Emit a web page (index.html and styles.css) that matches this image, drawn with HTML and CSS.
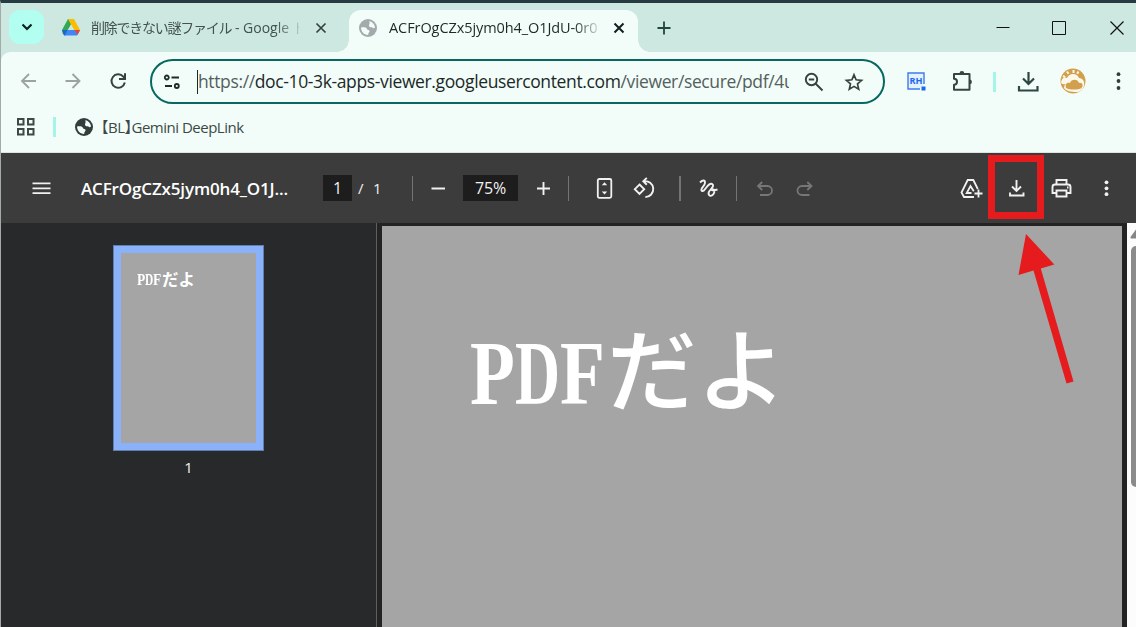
FILE: index.html
```html
<!DOCTYPE html>
<html lang="ja">
<head>
    <meta charset="UTF-8">
    <meta name="viewport" content="width=device-width, initial-scale=1.0">
    <title>PDF Viewer</title>
    <link rel="stylesheet" href="styles.css">
</head>
<body>
    <div class="window">
        <div class="tabstrip">
            <div class="tab-search">
                <svg width="14" height="14" viewBox="0 0 14 14"><path d="M2.500 4.500 7 9l4.500-4.500" fill="none" stroke="#10201e" stroke-width="2.200"/></svg>
            </div>
            <div class="tab">
                <svg class="favicon" width="18" height="17" viewBox="0 0 18 17">
                    <path d="M6 0h6L3.300 16.500.800 15 0 11z" fill="#34a853"/>
                    <path d="M6 0h6l6 11h-6z" fill="#fbbc04"/>
                    <path d="M3.200 11H18l-2.500 5q-.500.600-1.200.600H3.700Q2.500 16.600 2 16z" fill="#4285f4"/>
                    <path d="M0 11h5.500l-2.700 5.500Q2 16.300 1.700 15.500z" fill="#1967d2"/>
                    <path d="M12.500 11H18l-2.300 4.500z" fill="#ea4335"/>
                    <path d="M9 5.500 12.200 11H5.800z" fill="#cce8e1"/>
                </svg>
                <div class="tab-title"><span class="jp">削除できない謎ファイル</span> - Google ド</div>
                <svg class="tab-close" width="12" height="12" viewBox="0 0 12 12"><path d="m1.500 1.500 9 9m0-9-9 9" stroke="#33423f" stroke-width="1.700"/></svg>
            </div>
            <div class="tab active">
                <svg class="favicon" width="18" height="18" viewBox="0 0 18 18">
                    <circle cx="9" cy="9" r="9" fill="#a4a9ac"/>
                    <path d="M10.500 2c3 .800 5.300 3.400 5.500 6.500-.800 1.200-2.300 1-2.800-.300-1.700.400-3.300-.200-3.200-1.900.100-1 .900-1.300.500-2.200zM2 8.500c2.500-.300 5.500-.200 6 1.600.300 1.500 2.200.700 2.600 1.900.300 1.300-1.600 1.500-1.400 3.900C5 16 2.200 13 2 8.500z" fill="#f2fdf9"/>
                </svg>
                <div class="tab-title">ACFrOgCZx5jym0h4_O1JdU-0r0</div>
                <svg class="tab-close" width="12" height="12" viewBox="0 0 12 12"><path d="m1.500 1.500 9 9m0-9-9 9" stroke="#10201e" stroke-width="2"/></svg>
            </div>
            <svg class="new-tab" width="14" height="14" viewBox="0 0 14 14"><path d="M7 .500v13M.500 7h13" stroke="#24443e" stroke-width="1.800"/></svg>
            <div class="window-buttons">
                <svg width="14" height="14" viewBox="0 0 14 14"><path d="M.500 6.500h13" stroke="#111"/></svg>
                <svg width="14" height="14" viewBox="0 0 14 14"><path d="M1 .500h12.500v13H.500V.500z" fill="none" stroke="#111"/></svg>
                <svg width="14" height="14" viewBox="0 0 14 14"><path d="m.500.500 13 13m0-13-13 13" stroke="#111" stroke-width="1.200"/></svg>
            </div>
        </div>

        <div class="browser">
            <div class="navbar">
                <svg class="icon" viewBox="0 0 24 24" fill="none" stroke="#9da3a1" stroke-width="1.900"><path d="M19 12H5m7-7-7 7 7 7"/></svg>
                <svg class="icon forward" viewBox="0 0 24 24" fill="none" stroke="#9da3a1" stroke-width="1.900"><path d="M4.500 12h14m-7-7 7 7-7 7"/></svg>
                <svg class="icon reload" viewBox="0 0 24 24" fill="none" stroke="#34433f" stroke-width="2"><path d="M18.800 13.500A6.700 6.700 0 1 1 17.300 7.600l1.700 2M19 4.300V10h-6"/></svg>
                <div class="omnibox">
                    <svg width="18" height="18" viewBox="0 0 18 18" fill="none" stroke="#1d2b29" stroke-width="1.800"><circle cx="3.800" cy="4.500" r="2"/><path d="M8.500 4.500H16M2 13h7"/><circle cx="13.800" cy="13" r="2"/></svg>
                    <div class="url">https://<b>doc-10-3k-apps-viewer.googleusercontent.com</b>/viewer/secure/pdf/4u</div>
                    <svg class="zoom-icon" width="20" height="20" viewBox="0 0 20 20" fill="none" stroke="#37433f" stroke-width="1.900"><circle cx="7.500" cy="7.500" r="5.700"/><path d="m11.500 11.500 7 7M4.800 7.500h5.400"/></svg>
                    <svg class="star" width="20" height="20" viewBox="0 0 20 20" fill="none" stroke="#37433f" stroke-width="1.700"><path d="m10 2.800 2.100 5 5.500.500-4.100 3.600 1.200 5.400-4.700-2.900-4.700 2.900 1.200-5.400-4.100-3.600 5.500-.500z"/></svg>
                </div>
                <svg class="icon rh" viewBox="0 0 24 24"><path d="M20 15V4H4v16h12" fill="#e4f0fc" stroke="#3b7de9" stroke-width="1.400"/><text x="5.500" y="15" textLength="13" lengthAdjust="spacingAndGlyphs">RH</text><path d="M17.500 17.500h4v4h-4z" fill="#1769ee"/></svg>
                <svg class="icon puzzle" viewBox="0 0 24 24"><path d="M4 5h15.500v15.800H4v-5a3 3 0 0 0 0-6z" fill="none" stroke="#34463f" stroke-width="2" stroke-linejoin="round"/><path d="M9.500 4.500a2.400 2.400 0 0 1 4.800 0zm10 6a2.400 2.400 0 0 1 0 4.800z" fill="#34463f"/></svg>
                <span class="accent"></span>
                <svg class="icon download" viewBox="0 0 24 24" fill="none" stroke="#2d4742" stroke-width="2.200"><path d="M12.500 3v12M7 9.500l5.500 5.500L18 9.500M3 17v4.500h18.500V17"/></svg>
                <svg class="avatar" width="26" height="26" viewBox="0 0 26 26">
                    <circle cx="13" cy="13" r="12.500" fill="#d2a04c"/>
                    <path d="M1 15C1.500 10 4.500 8.500 7 10c2-5 10-5.500 12 0 4 0 6 4 5 8-1.500 4-5 6-7 6C11 24 6 23 4 20q0-3 2-4-3 1-5-1z" fill="#fbf7ea"/>
                    <path d="M6 20c-1-4 1-6 4-5 1-4.500 8-4.500 9 0 3-1 5 2.500 2.500 5-3 2-12 2-15.500 0z" fill="#d2a04c"/>
                    <path d="m3 8 2.200 1.200M7 3.500l1.500 2.300M13.500 2v3m5-1.500-1.300 2.300" stroke="#fbf7ea" stroke-width="2"/>
                </svg>
                <svg class="icon more" viewBox="0 0 24 24" fill="#2f3e3a"><circle cx="12.500" cy="5.200" r="1.900"/><circle cx="12.500" cy="12" r="1.900"/><circle cx="12.500" cy="19" r="1.900"/></svg>
            </div>
            <div class="bookmarks">
                <svg width="20" height="20" viewBox="0 0 20 20" fill="none" stroke="#3c4946" stroke-width="2"><path d="M2 2h5.500v5.500H2zM12 2h5.500v5.500H12zM2 12h5.500v5.500H2zM12 12h5.500v5.500H12z"/></svg>
                <span class="accent"></span>
                <svg width="18" height="18" viewBox="0 0 18 18">
                    <circle cx="9" cy="9" r="9" fill="#343d3c"/>
                    <path d="M10.500 2c3 .800 5.300 3.400 5.500 6.500-.800 1.200-2.300 1-2.800-.300-1.700.400-3.300-.200-3.200-1.900.100-1 .900-1.300.500-2.200zM2 8.500c2.500-.300 5.500-.200 6 1.600.300 1.500 2.200.700 2.600 1.900.300 1.300-1.600 1.500-1.400 3.900C5 16 2.200 13 2 8.500z" fill="#f2fdf9"/>
                </svg>
                <span class="bookmark">【BL】Gemini DeepLink</span>
            </div>
        </div>

        <div class="pdf-bar">
            <svg class="icon" viewBox="0 0 24 24" stroke="#f1f1f1" stroke-width="1.700"><path d="M3.500 7.300h18M3.500 12.300h18M3.500 17.200h18"/></svg>
            <div class="filename">ACFrOgCZx5jym0h4_O1J...</div>
            <div class="page-now">1</div>
            <div class="slash">/</div>
            <div class="page-total">1</div>
            <span class="divider d1"></span>
            <svg class="icon minus" viewBox="0 0 24 24" stroke="#f1f1f1" stroke-width="2"><path d="M5.500 12.500h13.500"/></svg>
            <div class="percent">75%</div>
            <svg class="icon plus" viewBox="0 0 24 24" stroke="#f1f1f1" stroke-width="1.900"><path d="M6 12.500h13M12.500 6v13"/></svg>
            <span class="divider d2"></span>
            <svg class="icon fit" viewBox="0 0 24 24"><rect x="5.800" y="3" width="13.500" height="18.800" rx="1.500" fill="none" stroke="#f1f1f1" stroke-width="1.800"/><path d="m9.800 9.300 2.700-3 2.700 3zm0 6.200 2.700 3 2.700-3z" fill="#f1f1f1"/></svg>
            <svg class="icon rotate" viewBox="0 0 24 24" fill="none" stroke="#f1f1f1" stroke-width="1.900"><path d="m7.500 8.500 4.700 4.700-4.700 4.700-4.700-4.700zM12 5.200a8 8 0 1 1 1.300 15.900M14.800 1.800l-3.500 3.500 3.500 3.400"/></svg>
            <span class="divider d3"></span>
            <svg class="icon draw" viewBox="0 0 24 24" fill="none" stroke="#f1f1f1" stroke-width="1.900"><path d="M4 6.500c2.800-2.800 5-2.500 5 .200C9 10 3.800 12.500 5.700 14.700c3 2.300 6-8.500 10.200-6.800 3.600 2-1.700 5-3.200 8.500-.700 3.300 2.300 4.500 4.300 2.300 2.300-2.500 1.500-6-.800-5.300-1.800.700 1.200 1.500 5.300.100"/></svg>
            <span class="divider d4"></span>
            <svg class="icon undo" viewBox="0 0 24 24" fill="none" stroke="#777" stroke-width="1.800"><path d="M9.200 6 5 10l4.200 4M5 10h9.500a4.500 4.500 0 0 1 0 9H7"/></svg>
            <svg class="icon redo" viewBox="0 0 24 24" fill="none" stroke="#777" stroke-width="1.800"><path d="M15.300 6l4.200 4-4.200 4m4.200-4H10a4.500 4.500 0 0 0 0 9h7.500"/></svg>
            <div class="pdf-actions">
                <svg class="icon" viewBox="0 0 24 24" fill="none" stroke="#f1f1f1" stroke-width="1.800"><path d="M15 21H5l-2.500-4.500L8.700 4h5.600l4.500 9M12.500 17H7.700l3.800-7 3.300 5.300M19.500 13.500v8M15.500 17.500h8"/></svg>
                <svg class="icon save" viewBox="0 0 24 24" fill="none" stroke="#f1f1f1" stroke-width="1.900"><path d="M12.500 4v11M8 10.500l4.500 4.500 4.500-4.500M6 16.500v3h13.500v-3"/></svg>
                <svg class="icon print" viewBox="0 0 24 24" fill="none" stroke="#f1f1f1" stroke-width="1.900"><path d="M7.500 8V4h10v4M7 17H3.500v-6q0-2.500 2.500-2.500h13q2.500 0 2.500 2.500v6H18M7.500 14.500h10v6h-10z"/><path d="M18 11.500h1.500"/></svg>
                <svg class="icon dots" viewBox="0 0 24 24" fill="#f1f1f1"><circle cx="12.500" cy="6.300" r="1.900"/><circle cx="12.500" cy="12.300" r="1.900"/><circle cx="12.500" cy="18.200" r="1.900"/></svg>
            </div>
        </div>

        <div class="viewer">
            <div class="sidebar">
                <div class="thumb">
                    <div class="mincho"><span>P</span><span>D</span><span>F</span><em>だよ</em></div>
                </div>
                <p>1</p>
            </div>
            <div class="page">
                <div class="mincho"><span>P</span><span>D</span><span>F</span><em>だよ</em></div>
            </div>
            <div class="scrollbar">
                <svg width="9" height="20" viewBox="0 0 9 20"><path d="M9 6.500 3.500 14q-.500 1.500 1 1.500H9z" fill="#858585"/></svg>
                <div class="scroll-thumb"></div>
            </div>
        </div>
    </div>

    <div class="highlight"></div>
    <svg class="arrow" width="59" height="152" viewBox="0 0 59 152"><path d="M11 0 39.300 30.500 25.800 34.500 58.500 147.500 51.500 149.500 18.500 36.500 3.500 41z" fill="#e51b1d"/></svg>
</body>
</html>
```
FILE: styles.css
```css
* {
    box-sizing: border-box;
}

body {
    margin: 0;
    width: 1136px;
    height: 627px;
    overflow: hidden;
    font-family: "Open Sans", "Noto Sans CJK JP", sans-serif;
}

svg {
    display: block;
    flex: none;
}

.window {
    height: 627px;
    display: flex;
    flex-direction: column;
    border-top: 3px solid #263c42;
    border-left: 1px solid #a3aaa8;
    background: #cce8e1;
}

/* tabs */
.tabstrip {
    height: 49px;
    display: flex;
    align-items: center;
    padding-left: 8px;
}

.tab-search {
    width: 35px;
    height: 34px;
    margin-bottom: 1px;
    border-radius: 11px;
    background: #b2fff2;
    display: flex;
    align-items: center;
    justify-content: center;
}

.tab {
    display: flex;
    align-items: center;
    width: 287px;
    height: 42px;
    padding-right: 13px;
    margin-left: 18px;
}

.tab-title {
    width: 208px;
    margin-left: 11px;
    overflow: hidden;
    white-space: nowrap;
    font-size: 14px;
    line-height: 24px;
    letter-spacing: 0;
    color: #43524f;
    -webkit-mask-image: linear-gradient(to right, #000 185px, transparent 214px);
    mask-image: linear-gradient(to right, #000 185px, transparent 214px);
}

.tab-title .jp {
    letter-spacing: -1.25px;
}

.tab-close {
    margin-left: 16px;
}

.tab.active {
    position: relative;
    width: 289px;
    margin: 7px 0 0;
    padding: 0 13px 7px 10px;
    border-radius: 12px 12px 0 0;
    background: #f2fdf9;
}

.tab.active .tab-title {
    width: 210px;
    margin-left: 12px;
    margin-right: -1px;
    font-size: 14.5px;
    letter-spacing: -0.08px;
    color: #1c2927;
}

.tab.active .tab-close {
    margin-left: 15px;
}

/* the outward curves at the foot of the active tab */
.tab.active::before,
.tab.active::after {
    content: "";
    position: absolute;
    bottom: 0;
    width: 12px;
    height: 12px;
}

.tab.active::before {
    left: -12px;
    background: radial-gradient(circle at 0 0, transparent 11.5px, #f2fdf9 12px);
}

.tab.active::after {
    right: -12px;
    background: radial-gradient(circle at 100% 0, transparent 11.5px, #f2fdf9 12px);
}

.new-tab {
    margin-left: 19px;
}

.window-buttons {
    display: flex;
    gap: 42px;
    margin-left: auto;
    padding-right: 12px;
}

.window-buttons svg:last-child {
    margin-left: 2px;
}

/* address bar */
.browser {
    height: 101px;
    border-radius: 9px 0 0 0;
    background: #f2fdf9;
    border-bottom: 1px solid #dce5e2;
}

.navbar {
    display: flex;
    align-items: center;
    height: 59px;
    padding-left: 16px;
}

.icon {
    width: 24px;
    height: 24px;
}

.navbar > .icon,
.navbar > .avatar {
    margin-bottom: 2px;
}

.forward {
    margin-left: 20px;
}

.reload {
    margin-left: 21px;
}

.omnibox {
    display: flex;
    align-items: center;
    width: 735px;
    height: 45px;
    margin-left: 20px;
    padding-left: 11px;
    border: 2px solid #08685f;
    border-radius: 23px;
}

.url {
    width: 592px;
    height: 24px;
    margin-left: 16px;
    border-left: 1px solid #1c2927;
    overflow: hidden;
    white-space: nowrap;
    font-size: 17.5px;
    line-height: 23px;
    letter-spacing: -0.37px;
    color: #53605d;
}

.url b {
    font-weight: 400;
    color: #1c2927;
}

.zoom-icon {
    margin-left: 15px;
}

.star {
    margin-left: 20px;
}

.rh {
    margin-left: 19px;
}

.rh text {
    font: 700 9px "Open Sans", sans-serif;
    fill: #1769ee;
}

.puzzle {
    margin-left: 22px;
}

.accent {
    width: 3px;
    height: 20px;
    background: #a2f5e7;
}

.navbar .accent {
    margin-left: 19px;
}

.download {
    margin-left: 20px;
}

.avatar {
    margin-left: 20px;
}

.more {
    margin-left: 20px;
}

.bookmarks {
    display: flex;
    align-items: center;
    height: 32px;
    padding-left: 15px;
}

.bookmarks .accent {
    margin: 0 19px 0 17px;
}

.bookmark {
    margin: 0 0 2px 8px;
    font-size: 15px;
    letter-spacing: -0.5px;
    white-space: nowrap;
    font-feature-settings: "halt";
    color: #3c4946;
}

/* pdf toolbar */
.pdf-bar {
    display: flex;
    align-items: center;
    height: 70px;
    padding-left: 28px;
    background: #3c3c3c;
    color: #f1f1f1;
    font-size: 15px;
}

.filename {
    width: 242px;
    margin-left: 28px;
    white-space: nowrap;
    font-size: 17px;
    font-weight: 600;
    letter-spacing: -0.15px;
    color: #fff;
}

.page-now,
.percent {
    width: 29px;
    height: 26px;
    line-height: 26px;
    text-align: center;
    font-size: 16px;
    background: #1d1d1d;
}

.percent {
    width: 55px;
    margin-left: 13px;
    letter-spacing: -0.2px;
}

.slash {
    width: 15px;
    margin-left: 6px;
}

.page-total {
    width: 10px;
}

.divider {
    width: 1px;
    height: 25px;
    background: #747474;
}

.d1 {
    margin-left: 29px;
}

.minus,
.plus {
    margin-left: 13px;
}

.d2 {
    margin-left: 13px;
}

.fit {
    margin-left: 23px;
}

.rotate {
    margin-left: 16px;
}

.d3 {
    width: 2px;
    margin-left: 23px;
}

.draw {
    margin-left: 15px;
}

.d4 {
    margin-left: 16px;
}

.undo {
    margin-left: 16px;
}

.redo {
    margin-left: 15px;
}

.pdf-actions {
    display: flex;
    margin-left: auto;
    padding-right: 18px;
}

.save,
.print,
.dots {
    margin-left: 21px;
}

/* document */
.viewer {
    flex: 1;
    display: flex;
    background: #232323;
}

.sidebar {
    width: 376px;
    padding: 22px 0 0 112px;
    background: #28292b;
    border-right: 1px solid #5f5f5f;
    color: #f1f1f1;
}

.thumb {
    width: 151px;
    height: 206px;
    padding: 19px 0 0 16px;
    border: 8px solid #8ab2fa;
    background: #a5a5a5;
    outline: 1px solid #607fae;
    outline-offset: -1px;
}

.sidebar p {
    width: 151px;
    margin: 6px 0 0;
    text-align: center;
    font-size: 15px;
    line-height: 20px;
}

.mincho {
    display: flex;
    font-family: "Noto Sans CJK JP", serif;
    font-size: 90px;
    font-weight: 500;
    line-height: 1;
    white-space: nowrap;
    color: #fff;
}

.mincho span {
    width: 0.49em;
    font-family: "Liberation Serif", serif;
    font-size: 1.02em;
    font-weight: 700;
    transform-origin: 0 50%;
    transform: scaleX(0.8);
}

.mincho span:nth-child(2) {
    transform: scaleX(0.68);
}

.mincho em {
    margin: -0.09em 0 0 0.02em;
    font-style: normal;
}

.thumb .mincho {
    font-size: 16.5px;
    font-weight: 700;
}

.page {
    width: 740px;
    margin: 3px 0 0 5px;
    padding: 102px 0 0 88px;
    background: #a5a5a5;
}

.scrollbar {
    width: 9px;
    margin-left: 5px;
    background: #fcfcfc;
}

.scroll-thumb {
    height: 241px;
    margin: 3px 0 0 4px;
    border-radius: 6px 0 0 6px;
    background: #8b8b8b;
}

/* marker drawn over the download button */
.highlight {
    position: absolute;
    left: 988px;
    top: 155px;
    width: 56px;
    height: 64px;
    border: 7px solid #e51b1d;
}

.arrow {
    position: absolute;
    left: 1015px;
    top: 234px;
}
```
